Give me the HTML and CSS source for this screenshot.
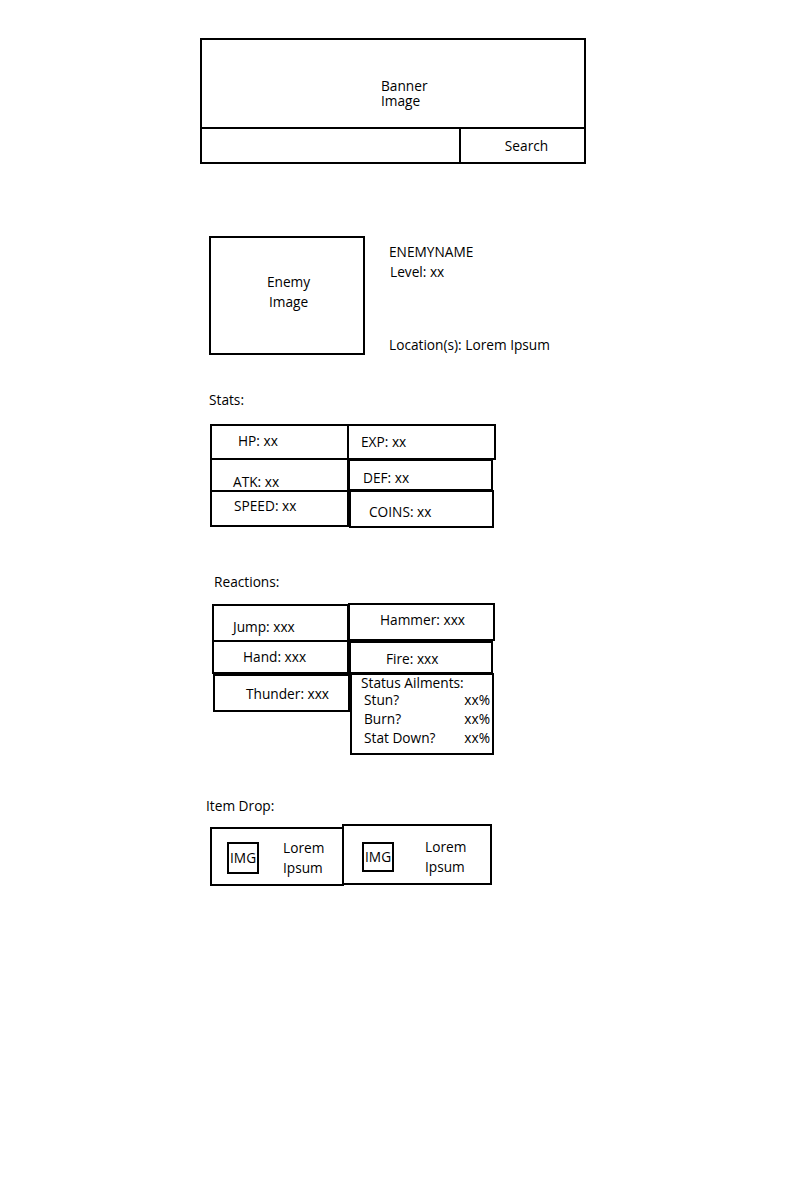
FILE: index.html
```html
<!DOCTYPE html>
<html lang="en">
<head>
<meta charset="utf-8">
<title>Enemy Page Wireframe</title>
<link rel="stylesheet" href="styles.css">
</head>
<body>
<div class="page">
  <div class="banner">
    <div class="banner-image"><div class="banner-text">Banner<br>Image</div></div>
    <div class="search-row">
      <div class="search-input"></div>
      <div class="search-btn">Search</div>
    </div>
  </div>

  <div class="enemy">
    <div class="enemy-image"><div>Enemy<br>Image</div></div>
    <div class="enemy-info">
      <div class="info-top">
        <div>ENEMYNAME</div>
        <div class="level">Level: xx</div>
      </div>
      <div>Location(s): Lorem Ipsum</div>
    </div>
  </div>

  <div class="label label-stats">Stats:</div>
  <div class="table">
    <div class="col col-left">
      <div class="cell c-hp">HP: xx</div>
      <div class="cell c-atk">ATK: xx</div>
      <div class="cell c-speed">SPEED: xx</div>
    </div>
    <div class="col col-right">
      <div class="cell c-exp">EXP: xx</div>
      <div class="cell c-def">DEF: xx</div>
      <div class="cell c-coins">COINS: xx</div>
    </div>
  </div>

  <div class="label label-reactions">Reactions:</div>
  <div class="table table-reactions">
    <div class="col col-left">
      <div class="cell r-jump">Jump: xxx</div>
      <div class="cell r-hand">Hand: xxx</div>
      <div class="cell r-thunder">Thunder: xxx</div>
    </div>
    <div class="col col-right">
      <div class="cell r-hammer">Hammer: xxx</div>
      <div class="cell r-fire">Fire: xxx</div>
      <div class="cell r-status">
        <div class="status-head">Status Ailments:</div>
        <div class="status-row"><span>Stun?</span><span>xx%</span></div>
        <div class="status-row"><span>Burn?</span><span>xx%</span></div>
        <div class="status-row"><span>Stat Down?</span><span>xx%</span></div>
      </div>
    </div>
  </div>

  <div class="label label-items">Item Drop:</div>
  <div class="items">
    <div class="item item-1">
      <div class="img-box">IMG</div>
      <div class="item-name">Lorem<br>Ipsum</div>
    </div>
    <div class="item item-2">
      <div class="img-box">IMG</div>
      <div class="item-name">Lorem<br>Ipsum</div>
    </div>
  </div>
</div>
</body>
</html>
```

FILE: styles.css
```css
* { box-sizing: border-box; }
html, body { margin: 0; background: #fff; }
body {
  font-family: "Open Sans", "Noto Sans", sans-serif;
  font-size: 13.7px;
  line-height: 20px;
  color: #000;
}
.page { padding-top: 38px; width: 800px; min-height: 1200px; }

/* Banner */
.banner {
  margin-left: 200px;
  width: 386px;
  height: 126px;
  border: 2px solid #000;
  display: flex;
  flex-direction: column;
}
.banner-image { height: 88px; padding: 38px 0 0 179px; }
.banner-text { line-height: 15px; }
.search-row { flex: 1; display: flex; border-top: 2px solid #000; }
.search-input { width: 259px; border-right: 2px solid #000; }
.search-btn { flex: 1; text-align: center; padding-left: 8px; line-height: 32px; padding-top: 1px; }

/* Enemy */
.enemy { display: flex; margin: 72px 0 0 209px; }
.enemy-image {
  width: 156px; height: 119px;
  border: 2px solid #000;
  display: flex; align-items: center; justify-content: center;
  text-align: center;
  padding: 0 0 8px 3px;
}
.enemy-info {
  margin-left: 24px;
  height: 119px;
  padding-top: 6px;
  display: flex; flex-direction: column; justify-content: space-between;
}
.level { padding-left: 1px; }

/* Labels */
.label { line-height: 20px; }
.label-stats { margin: 35px 0 0 209px; }
.label-reactions { margin: 44px 0 0 214px; }
.label-items { margin: 41px 0 0 206px; }

/* Tables */
.table { display: flex; align-items: flex-start; margin: 14px 0 0 210px; }
.table-reactions { margin: 11px 0 0 212px; }
.col { display: flex; flex-direction: column; align-items: flex-start; }
.col-right { margin-left: -2px; }
.cell { border: 2px solid #000; white-space: nowrap; }

.c-hp { width: 139px; height: 36px; padding: 5px 0 0 26px; }
.c-atk { width: 139px; height: 34px; margin-top: -2px; padding: 12px 0 0 21px; }
.c-speed { width: 139px; height: 37px; margin-top: -2px; padding: 4px 0 0 22px; }
.c-exp { width: 149px; height: 36px; padding: 6px 0 0 12px; }
.c-def { width: 145px; height: 32px; margin: -1px 0 0 1px; padding: 7px 0 0 13px; }
.c-coins { width: 145px; height: 38px; margin: -1px 0 0 2px; padding: 10px 0 0 18px; }

.table-reactions .col-left { margin-top: 1px; }
.r-jump { width: 137px; height: 38px; padding: 11px 0 0 19px; }
.r-hand { width: 137px; height: 34px; margin-top: -2px; padding: 5px 0 0 29px; }
.r-thunder { width: 137px; height: 38px; margin: 0 0 0 1px; padding: 8px 0 0 31px; }
.r-hammer { width: 147px; height: 38px; padding: 5px 0 0 30px; }
.r-fire { width: 144px; height: 33px; margin-left: 1px; padding: 6px 0 0 35px; }
.r-status { width: 144px; height: 82px; margin: -1px 0 0 2px; padding: 0 2px 0 9px; }
.status-head { line-height: 15px; }
.status-row { display: flex; justify-content: space-between; line-height: 19px; padding-left: 3px; }

/* Items */
.items { display: flex; align-items: flex-start; margin: 8px 0 0 210px; }
.item { border: 2px solid #000; display: flex; align-items: flex-start; }
.item-1 { width: 134px; height: 59px; margin-top: 3px; padding-left: 15px; }
.item-2 { width: 150px; height: 61px; margin-left: -2px; padding-left: 18px; }
.img-box {
  width: 32px; height: 32px;
  border: 2px solid #000;
  line-height: 28px;
  padding-left: 1px;
  white-space: nowrap;
  overflow: visible;
}
.item-1 .img-box { margin-top: 13px; }
.item-2 .img-box { margin-top: 16px; height: 30px; line-height: 26px; }
.item-1 .item-name { margin: 9px 0 0 24px; }
.item-2 .item-name { margin: 11px 0 0 31px; }
```
